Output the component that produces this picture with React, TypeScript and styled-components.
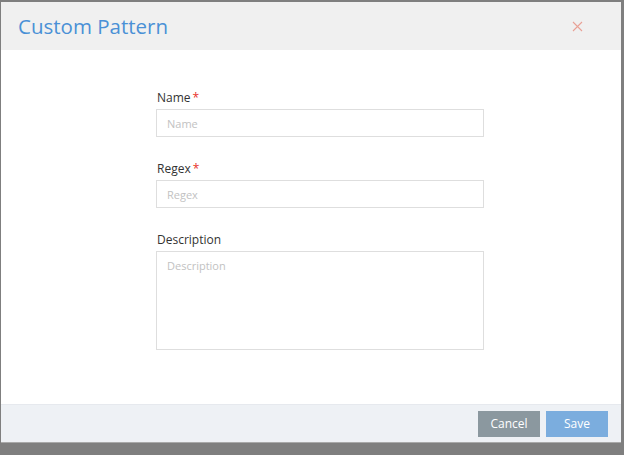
import React from 'react'
import styled, { createGlobalStyle } from 'styled-components'

const GlobalStyle = createGlobalStyle`
  html, body {
    margin: 0;
    padding: 0;
    background: #7f7f7f;
  }

  * {
    box-sizing: border-box;
  }
`

const Backdrop = styled.div`
  width: 624px;
  height: 455px;
  padding: 2px 0 0 1px;
  background: #7f7f7f;
  font-family: 'Open Sans', 'Noto Sans', sans-serif;
`

const Dialog = styled.div`
  width: 620px;
  height: 441px;
  display: flex;
  flex-direction: column;
  background: #ffffff;
  border-bottom: 1px solid #a9a9a9;
`

const Header = styled.div`
  height: 48px;
  padding: 0 38px 0 17px;
  display: flex;
  align-items: center;
  justify-content: space-between;
  background: #f0f0f0;

  h1 {
    margin: 0;
    font-size: 20.5px;
    font-weight: 400;
    color: #4a90d6;
  }
`

const CloseButton = styled.button`
  border: none;
  padding: 0;
  width: 11px;
  height: 11px;
  display: flex;
  background: transparent;
  color: #e9a196;
  cursor: pointer;
`

const Body = styled.div`
  flex: 1;
  padding: 39px 0 0 155px;
  display: flex;
  flex-direction: column;
  gap: 23px;
`

const Field = styled.div`
  width: 328px;
  display: flex;
  flex-direction: column;
  gap: 2px;
`

const Label = styled.label`
  font-size: 12px;
  line-height: 18px;
  color: #333333;
  padding-left: 1px;

  span {
    color: #e8302a;
    margin-left: 2px;
  }
`

const Input = styled.input`
  height: 28px;
  padding: 0 10px;
  border: 1px solid #dedede;
  border-radius: 0;
  font-family: inherit;
  font-size: 11px;
  color: #333;
  outline: none;

  &::placeholder {
    color: #c2c2c2;
  }
`

const TextArea = styled.textarea`
  height: 99px;
  padding: 6px 10px;
  border: 1px solid #dedede;
  border-radius: 0;
  resize: none;
  font-family: inherit;
  font-size: 11px;
  color: #333;
  outline: none;

  &::placeholder {
    color: #c2c2c2;
  }
`

const Footer = styled.div`
  height: 38px;
  padding: 0 13px 0 0;
  display: flex;
  align-items: center;
  justify-content: flex-end;
  gap: 6px;
  background: #eef1f5;
  border-top: 1px solid #e6e9ee;
`

const Button = styled.button<{ $primary?: boolean }>`
  width: 62px;
  height: 26px;
  border: none;
  padding: 0;
  font-family: inherit;
  font-size: 12px;
  color: #ffffff;
  background: ${(p) => (p.$primary ? '#7badde' : '#8b989f')};
  cursor: pointer;
`

const App: React.FC = () => {
  return (
    <>
      <GlobalStyle />
      <Backdrop>
        <Dialog>
          <Header>
            <h1>Custom Pattern</h1>
            <CloseButton aria-label="close">
              <svg width="11" height="11" viewBox="0 0 11 11">
                <path d="M1 1 L10 10 M10 1 L1 10" stroke="currentColor" strokeWidth="1.1" fill="none" />
              </svg>
            </CloseButton>
          </Header>

          <Body>
            <Field>
              <Label>
                Name<span>*</span>
              </Label>
              <Input placeholder="Name" />
            </Field>

            <Field>
              <Label>
                Regex<span>*</span>
              </Label>
              <Input placeholder="Regex" />
            </Field>

            <Field>
              <Label>Description</Label>
              <TextArea placeholder="Description" />
            </Field>
          </Body>

          <Footer>
            <Button>Cancel</Button>
            <Button $primary>Save</Button>
          </Footer>
        </Dialog>
      </Backdrop>
    </>
  )
}

export default App
